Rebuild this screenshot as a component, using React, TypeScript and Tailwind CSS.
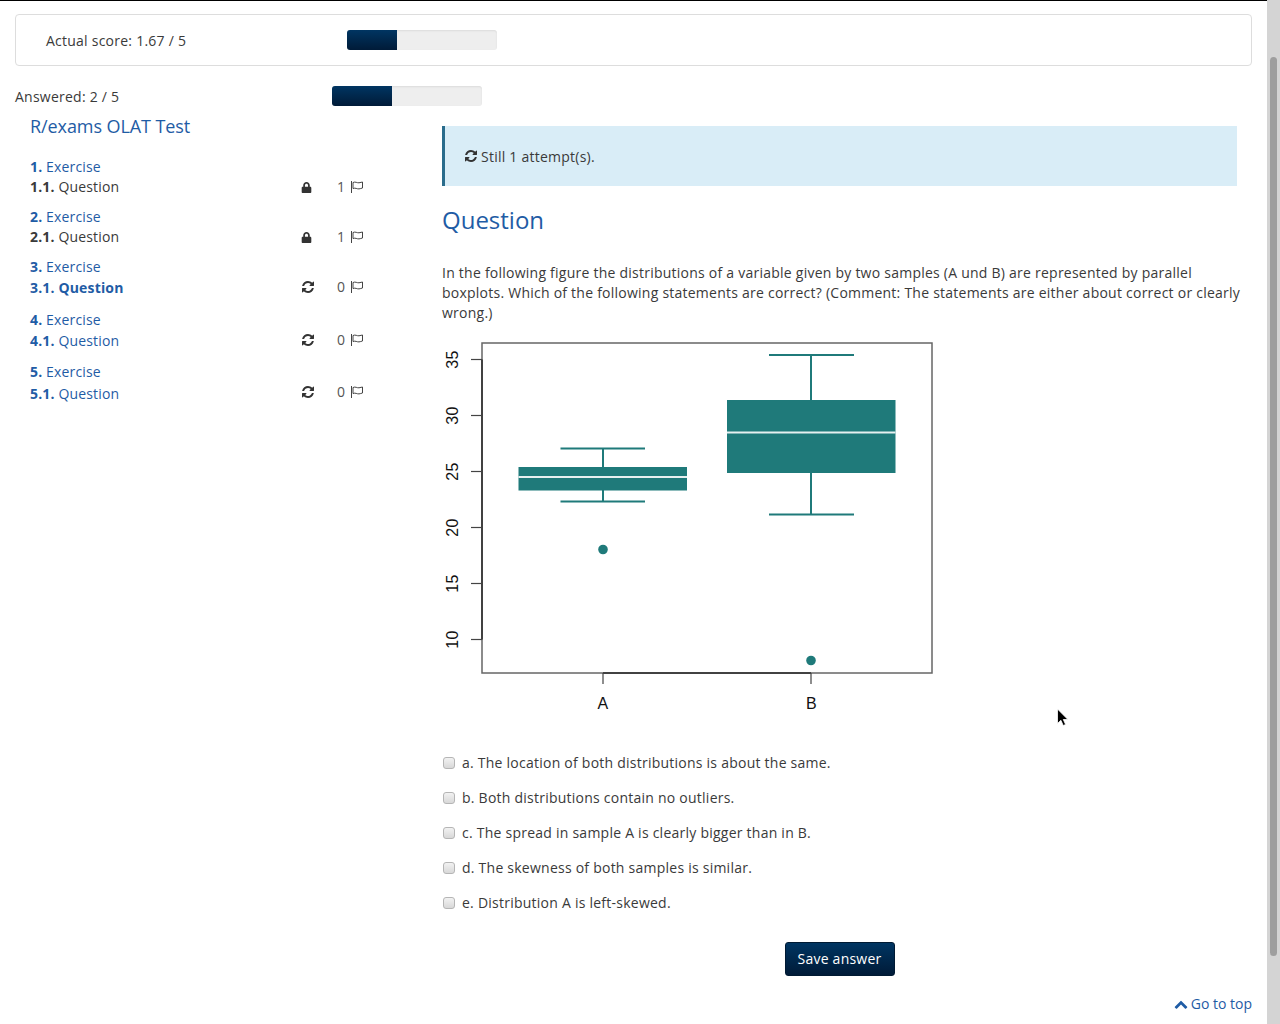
import { FaLock } from 'react-icons/fa';

const navGroups = [
  { num: '1.', sub: '1.1.', state: 'locked', count: 1, groupCls: 'mt-[21px]', rowCls: '', metaCls: '' },
  { num: '2.', sub: '2.1.', state: 'locked', count: 1, groupCls: 'mt-[10px]', rowCls: '', metaCls: '' },
  { num: '3.', sub: '3.1.', state: 'active', count: 0, groupCls: 'mt-[10px]', rowCls: 'mt-px', metaCls: '-mt-[2px]' },
  { num: '4.', sub: '4.1.', state: 'open', count: 0, groupCls: 'mt-[12px]', rowCls: 'mt-px', metaCls: '-mt-[2px]' },
  { num: '5.', sub: '5.1.', state: 'open', count: 0, groupCls: 'mt-[11px]', rowCls: 'mt-[2px]', metaCls: '-mt-[4px]' },
];

const answers = [
  'a. The location of both distributions is about the same.',
  'b. Both distributions contain no outliers.',
  'c. The spread in sample A is clearly bigger than in B.',
  'd. The skewness of both samples is similar.',
  'e. Distribution A is left-skewed.',
];

function Progress({ percent }: { percent: number }) {
  return (
    <div className="h-5 w-[150px] overflow-hidden rounded-[3px] bg-[#eeeeee] shadow-[inset_0_1px_2px_rgba(0,0,0,0.08)]">
      <div
        className="h-full bg-linear-to-b from-[#003562] to-[#001b38]"
        style={{ width: `${percent}%` }}
      />
    </div>
  );
}

function RefreshIcon() {
  return (
    <svg className="shrink-0" width="14" height="14" viewBox="0 0 1792 1792" fill="#333333">
      <path d="M1639 1056q0 5-1 7-64 268-268 434.5t-478 166.5q-146 0-282.5-55t-243.5-157l-129 129q-19 19-45 19t-45-19-19-45v-448q0-26 19-45t45-19h448q26 0 45 19t19 45-19 45l-137 137q71 66 161 102t187 36q134 0 250-65t186-179q11-17 53-117 8-23 30-23h192q13 0 22.5 9.5t9.5 22.5zm25-800v448q0 26-19 45t-45 19h-448q-26 0-45-19t-19-45 19-45l138-138q-148-137-349-137-134 0-250 65t-186 179q-11 17-53 117-8 23-30 23h-199q-13 0-22.5-9.5t-9.5-22.5v-7q65-268 270-434.5t480-166.5q146 0 284 55.500t245 156.500l130-129q19-19 45-19t45 19 19 45z" />
    </svg>
  );
}

function FlagIcon() {
  return (
    <svg width="14" height="14" viewBox="0 0 14 14" fill="none" stroke="#444444" strokeWidth="1">
      <path d="M1.5 1v12" />
      <path d="M3 2.5c2.5-1.2 4 .6 6 .3 1.2-.2 2.4-.6 3.5-.8v6c-1.2.3-2.4.8-3.5.9-2 .2-3.5-1.4-6-.4z" />
    </svg>
  );
}

function BoxPlot() {
  const teal = '#1f7a7a';
  const yTicks = [
    { label: '35', y: 359.5 },
    { label: '30', y: 415.5 },
    { label: '25', y: 471.5 },
    { label: '20', y: 527.5 },
    { label: '15', y: 583.5 },
    { label: '10', y: 639.5 },
  ];
  return (
    <svg className="mt-[10px] block" width="500" height="385" viewBox="442 333 500 385">
      <rect x="482" y="343" width="450" height="330" fill="none" stroke="#666666" strokeWidth="1.5" />
      <path d="M482 359.5V639.5M603 673H811" stroke="#2a2a2a" strokeWidth="1.5" fill="none" />
      {yTicks.map(t => (
        <g key={t.label}>
          <path d={`M471 ${t.y}H482`} stroke="#444444" strokeWidth="1.2" />
          <text
            x="458"
            y={t.y}
            fontSize="16"
            fill="#111111"
            fontFamily="'Liberation Sans', sans-serif"
            textAnchor="middle"
            transform={`rotate(-90 458 ${t.y})`}
          >
            {t.label}
          </text>
        </g>
      ))}
      <path d="M603 673V684M811 673V684" stroke="#444444" strokeWidth="1.2" />
      <text x="603" y="709" fontSize="16" fill="#111111" fontFamily="'Liberation Sans', sans-serif" textAnchor="middle">A</text>
      <text x="811.5" y="709" fontSize="16" fill="#111111" fontFamily="'Liberation Sans', sans-serif" textAnchor="middle">B</text>

      <g stroke={teal} strokeWidth="2" fill="none">
        <path d="M560.5 448.5H645M603 448.5V467M603 490V501.5M560.5 501.5H645" />
        <path d="M769 355H854M811 355V400M811 473V514.5M769 514.5H854" />
      </g>
      <rect x="518.5" y="467" width="168.5" height="23.5" fill={teal} />
      <rect x="727" y="400" width="168.5" height="73" fill={teal} />
      <path d="M518.5 477H687M727 432.5H895.5" stroke="#e6f0f0" strokeWidth="2" />
      <circle cx="603" cy="549.5" r="4.8" fill={teal} />
      <circle cx="811" cy="660.5" r="4.8" fill={teal} />
    </svg>
  );
}

export default function App() {
  return (
    <div className="relative flex h-[1024px] overflow-hidden bg-white font-['Open_Sans',sans-serif] text-sm leading-5 tracking-[0.24px] text-[#3a3a3a]">
      <div className="h-full w-[1267px] border-t border-black">
        {/* Score panel */}
        <div className="mx-[15px] mt-[13px] flex h-[52px] items-center rounded border border-[#dddddd] pl-[30px]">
          <span className="w-[301px] pt-0.5">Actual score: 1.67 / 5</span>
          <Progress percent={33.4} />
        </div>

        <div className="mt-5 flex h-5 items-center pl-[15px]">
          <span className="w-[317px] pt-0.5">Answered: 2 / 5</span>
          <Progress percent={40} />
        </div>

        <div className="mt-[10px] flex">
          {/* Sidebar */}
          <aside className="w-[442px] pl-[30px] tracking-[0.16px]">
            <h3 className="text-lg leading-5 tracking-[-0.08px] text-[#1f5ca5]">R/exams OLAT Test</h3>
            {navGroups.map(g => (
              <div key={g.num} className={g.groupCls}>
                <div className="text-[#1f5ca5]">
                  <b className="font-bold">{g.num}</b> Exercise
                </div>
                <div className={`flex items-center ${g.rowCls}`}>
                  <span
                    className={`w-[271px] ${
                      g.state === 'locked'
                        ? ''
                        : g.state === 'active'
                        ? 'font-bold text-[#1f5ca5]'
                        : 'text-[#1f5ca5]'
                    }`}
                  >
                    <b className="font-bold">{g.sub}</b> Question
                  </span>
                  <div className={`flex items-center ${g.metaCls}`}>
                    <span className="flex w-9 justify-start">
                      {g.state === 'locked' ? (
                        <FaLock className="size-[11px] text-[#333333]" />
                      ) : (
                        <RefreshIcon />
                      )}
                    </span>
                    <span className="w-[13px] text-[#555555]">{g.count}</span>
                    <FlagIcon />
                  </div>
                </div>
              </div>
            ))}
          </aside>

          {/* Question */}
          <main className="mt-[10px] w-[795px]">
            <div className="flex h-[60px] items-center gap-[3px] border-l-[3px] border-[#2a6c8c] bg-[#d9edf7] pl-[19px]">
              <RefreshIcon />
              <span className="pt-0.5">Still 1 attempt(s).</span>
            </div>

            <h2 className="mt-[19px] text-2xl leading-[30px] tracking-normal text-[#1f5ca5]">Question</h2>

            <p className="mt-[28px] w-[800px]">
              In the following figure the distributions of a variable given by two samples (A und B) are
              represented by parallel boxplots. Which of the following statements are correct? (Comment:
              The statements are either about correct or clearly wrong.)
            </p>

            <BoxPlot />

            <div className="mt-[35px] flex flex-col gap-[15px]">
              {answers.map(text => (
                <label key={text} className="flex items-center gap-[7px]">
                  <input
                    type="checkbox"
                    className="ml-px size-3 appearance-none rounded-[3px] border border-[#b5b5b5] bg-linear-to-b from-[#f2f2f2] to-[#d8d8d8]"
                  />
                  <span>{text}</span>
                </label>
              ))}
            </div>

            <div className="mt-[29px] flex justify-center">
              <button className="h-[34px] w-[110px] rounded-[3px] border border-[#001a33] bg-linear-to-b from-[#003562] to-[#001b38] text-white">
                Save answer
              </button>
            </div>
          </main>
        </div>

        <div className="mt-[18px] flex items-center justify-end gap-[3px] pr-[15px] tracking-normal text-[#1f5ca5]">
          <svg width="14" height="14" viewBox="0 0 1792 1792" fill="#1f5ca5">
            <path d="M1683 1331l-166 165q-19 19-45 19t-45-19l-531-531-531 531q-19 19-45 19t-45-19l-166-165q-19-19-19-45.5t19-45.5l742-741q19-19 45-19t45 19l742 741q19 19 19 45.5t-19 45.5z" />
          </svg>
          <a href="#top">Go to top</a>
        </div>
      </div>

      {/* Scrollbar */}
      <div className="h-full w-[13px] bg-[#d4d4d4] pt-[57px]">
        <div className="mx-auto h-[899px] w-[7px] rounded-full bg-[#9e9e9e]" />
      </div>

      {/* Mouse pointer */}
      <svg className="absolute left-[1056px] top-[708px]" width="14" height="20" viewBox="0 0 14 20">
        <path d="M1.5 1v14.5l3.4-3.2 2.3 5.2 2.4-1-2.3-5h4.6z" fill="#000000" stroke="#ffffff" strokeWidth="0.8" />
      </svg>
    </div>
  );
}
